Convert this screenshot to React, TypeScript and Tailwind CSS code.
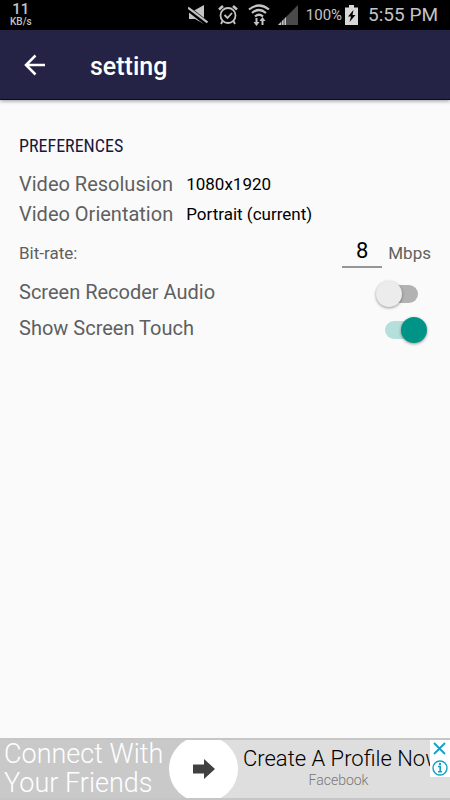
import React, { useState } from "react";

interface SwitchRowProps {
  id: string;
  label: string;
  checked: boolean;
  onChange: (value: boolean) => void;
}

const StatusBar: React.FC = () => (
  <div className="flex h-[30px] items-center bg-black pr-3 pl-[10px] text-[#c4c4c4]">
    <div className="flex flex-col items-center font-medium">
      <span className="text-[15px] leading-[14px]">11</span>
      <span className="text-[10px] leading-3">KB/s</span>
    </div>
    <div className="ml-auto flex items-center">
      <svg className="mr-[10px] h-5 w-5" viewBox="0 0 20 20" fill="currentColor">
        <path d="M1 5h6l9-5v19l-9-5H1z" />
        <path d="M0 3.500 19 18.500" stroke="#000" strokeWidth="5" />
        <path d="M0 2.500 19.500 17.500" stroke="currentColor" strokeWidth="2.200" />
      </svg>
      <svg className="mr-[10px] h-5 w-5" viewBox="0 0 20 20" fill="none" stroke="currentColor" strokeWidth="1.800">
        <circle cx="10" cy="10.500" r="7.500" />
        <path d="m6.500 10 3 3 4.500-5" />
        <path d="M1 4.500 5 1M19 4.500 15 1" strokeWidth="2.600" />
        <path d="M4.500 16 3 19M15.500 16l1.500 3" />
      </svg>
      <svg className="mr-2 h-[22px] w-[22px]" viewBox="0 0 22 22" fill="none" stroke="currentColor" strokeWidth="2.200">
        <path d="M1 5.500q10-8 20 0M4 9q7-6 14 0M7 12.500q4-3.500 8 0" />
        <path d="M8.500 14v5M14.500 21v-5" strokeWidth="2" />
        <path d="M5.500 18h6l-3 4zM11.500 17h6l-3-4z" fill="currentColor" stroke="none" />
      </svg>
      <svg className="mr-2 h-5 w-5" viewBox="0 0 20 20">
        <path d="M20 0v20H0z" fill="#4a4a4a" />
        <path d="M8 12v8H0z" fill="currentColor" />
        <path d="M3.500 15v5M6 13v7" stroke="#000" strokeWidth="0.600" />
      </svg>
      <span className="mr-[3px] text-[15px] leading-5">100%</span>
      <svg className="mr-[10px] h-5 w-[13px]" viewBox="0 0 13 20">
        <path d="M4 0h5v2.500h4V20H0V2.500h4z" fill="#d8d8d8" />
        <path d="M8.500 5 3 11.500h3L4.500 17 10.500 10H7.500z" fill="#000" />
      </svg>
      <span className="text-[19px] leading-6">5:55 PM</span>
    </div>
  </div>
);

const SwitchRow: React.FC<SwitchRowProps> = ({ id, label, checked, onChange }) => (
  <div className="flex h-9 items-center justify-between pr-1">
    <label htmlFor={id} className="text-[20px] leading-6">
      {label}
    </label>
    <input
      id={id}
      type="checkbox"
      role="switch"
      checked={checked}
      onChange={(e) => onChange(e.target.checked)}
      className="relative mt-1 h-[26px] w-[51px] cursor-pointer appearance-none before:absolute before:inset-x-[9px] before:inset-y-1 before:rounded-full before:bg-[#b2b2b2] after:absolute after:top-0 after:left-0 after:size-[26px] after:rounded-full after:bg-[#ececec] after:shadow-[0_1px_3px_rgba(0,0,0,0.4)] checked:before:bg-[#b5dfda] checked:after:left-[25px] checked:after:bg-[#009486]"
    />
  </div>
);

const AdBanner: React.FC = () => (
  <aside className="relative mt-auto flex h-[62px] overflow-hidden border-y-2 border-[#c6c6c6] bg-[#dedede]">
    <div className="w-[202px] shrink-0 bg-[#c9c9c9] pl-1 text-[27px] leading-[29px] font-light whitespace-nowrap text-white">
      Connect With
      <br />
      Your Friends
    </div>
    <button
      type="button"
      aria-label="Open"
      className="-my-1 -ml-[33px] flex h-[66px] w-[69px] shrink-0 items-center justify-center rounded-full bg-white"
    >
      <svg className="h-5 w-[22px]" viewBox="0 0 22 20" fill="#404040">
        <path d="M0 5.500h11V0l11 10-11 10v-5.500H0z" />
      </svg>
    </button>
    <a href="#" className="min-w-0 flex-1 pt-1 pl-[5px] whitespace-nowrap">
      <span className="block text-[22px] leading-[30px] font-light text-black">Create A Profile Now</span>
      <span className="block pr-4 text-center text-[14px] leading-3 font-light text-[#777]">Facebook</span>
    </a>
    <div className="absolute top-0 right-0 flex w-5 flex-col items-center bg-white text-[#14a0c4]">
      <button type="button" aria-label="Close ad" className="h-[18px]">
        <svg className="size-[18px]" viewBox="0 0 18 18" stroke="currentColor" strokeWidth="1.800">
          <path d="m3 3 11 11M14 3 3 14" />
        </svg>
      </button>
      <button type="button" aria-label="About this ad" className="h-[19px]">
        <svg className="size-[18px]" viewBox="0 0 18 18" fill="none" stroke="currentColor">
          <circle cx="9" cy="9" r="7" strokeWidth="1.400" />
          <path d="M7 7.500h2.200v5M7 12.800h4" strokeWidth="1.600" />
          <circle cx="9" cy="5" r="1.200" fill="currentColor" stroke="none" />
        </svg>
      </button>
    </div>
  </aside>
);

export default function App() {
  const [bitRate, setBitRate] = useState("8");
  const [audio, setAudio] = useState(false);
  const [touch, setTouch] = useState(true);

  return (
    <div className="flex min-h-screen flex-col bg-[#fafafa] font-['Roboto',sans-serif] text-[#5f5f5f]">
      <StatusBar />
      <header className="flex h-[70px] items-center border-b border-[#0c0b20] bg-[#252345] pl-6 text-white shadow-[0_1px_4px_rgba(0,0,0,0.4)]">
        <button type="button" aria-label="Back" className="mr-11">
          <svg className="size-[22px]" viewBox="0 0 22 22" fill="none" stroke="currentColor" strokeWidth="2.500">
            <path d="M21 11H3M11.500 1.500 2 11l9.500 9.500" />
          </svg>
        </button>
        <h1 className="pt-1 text-[25px] leading-8 font-medium">setting</h1>
      </header>

      <main className="px-[19px] pt-9">
        <h2 className="font-['Roboto_Condensed','Roboto',sans-serif] text-[18px] leading-5 text-[#191740]">
          PREFERENCES
        </h2>
        <dl className="mt-[13px] grid grid-cols-[auto_1fr] gap-x-[13px] leading-[30px]">
          <dt className="text-[20px]">Video Resolusion</dt>
          <dd className="text-[17px] text-black">1080x1920</dd>
          <dt className="text-[20px]">Video Orientation</dt>
          <dd className="text-[17px] text-black">Portrait (current)</dd>
        </dl>
        <div className="mt-[6px] mb-[3px] flex h-9 items-center text-[17px] leading-6">
          <label htmlFor="bitrate">Bit-rate:</label>
          <input
            id="bitrate"
            type="text"
            inputMode="numeric"
            value={bitRate}
            onChange={(e) => setBitRate(e.target.value)}
            className="mr-[6px] ml-auto h-[30px] w-10 border-b-2 border-[#969696] bg-transparent pb-1 text-center text-[22px] text-black outline-none"
          />
          <span>Mbps</span>
        </div>
        <SwitchRow id="audio" label="Screen Recoder Audio" checked={audio} onChange={setAudio} />
        <SwitchRow id="touch" label="Show Screen Touch" checked={touch} onChange={setTouch} />
      </main>

      <AdBanner />
    </div>
  );
}
